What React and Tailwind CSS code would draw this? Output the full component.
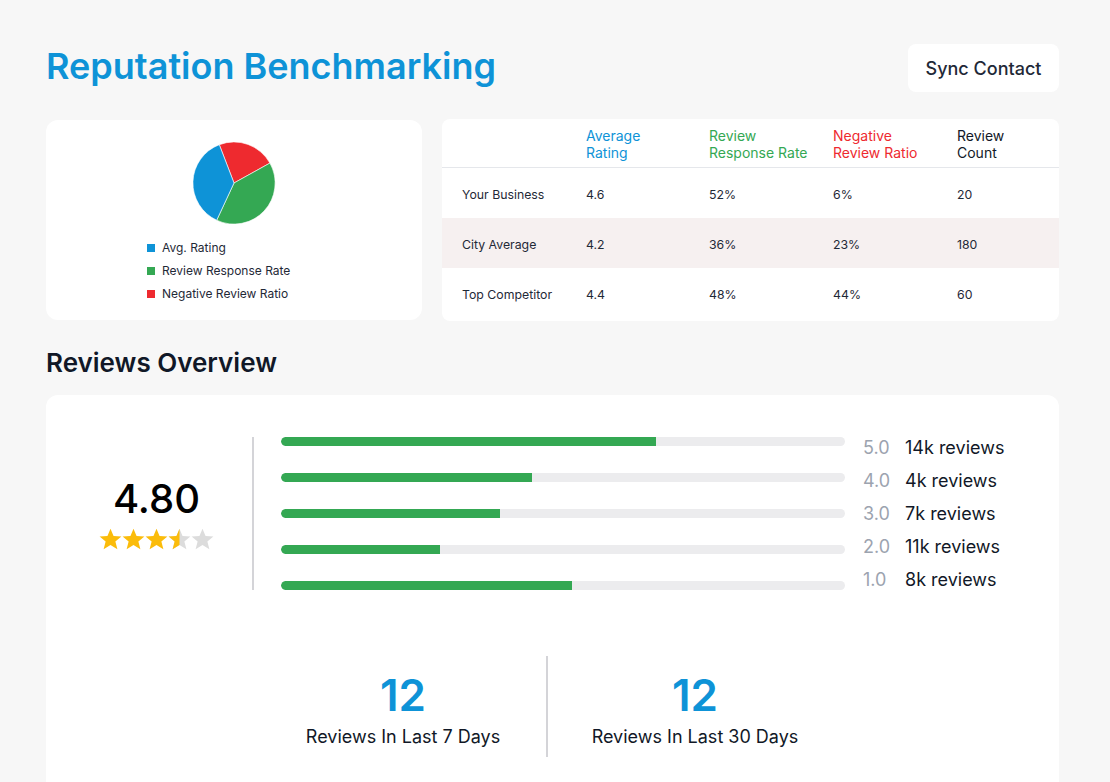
const BLUE = '#0e93d7'

const TABLE = [
  { name: 'Your Business', avg: '4.6', rate: '52%', neg: '6%', count: '20' },
  { name: 'City Average', avg: '4.2', rate: '36%', neg: '23%', count: '180', tint: true },
  { name: 'Top Competitor', avg: '4.4', rate: '48%', neg: '44%', count: '60' },
]

const BARS = [
  { label: '5.0', pct: 66.5, text: '14k reviews' },
  { label: '4.0', pct: 44.5, text: '4k reviews' },
  { label: '3.0', pct: 38.8, text: '7k reviews' },
  { label: '2.0', pct: 28.2, text: '11k reviews' },
  { label: '1.0', pct: 51.6, text: '8k reviews' },
]

const STAR = '12,0.8 15.2,8.4 23.4,8.9 17.1,14.1 19.2,22.2 12,17.7 4.8,22.2 6.9,14.1 0.6,8.9 8.8,8.4'

function Pie() {
  return (
    <svg width="84" height="84" viewBox="0 0 84 84">
      <path d="M42 42 L27.3 3.7 A41 41 0 0 1 77.9 22.1 Z" fill="#ee2a2f" stroke="#fff" strokeWidth="0.6" />
      <path d="M42 42 L77.9 22.1 A41 41 0 0 1 24.7 79.2 Z" fill="#34a853" stroke="#fff" strokeWidth="0.6" />
      <path d="M42 42 L24.7 79.2 A41 41 0 0 1 27.3 3.7 Z" fill="#0e93d7" stroke="#fff" strokeWidth="0.6" />
    </svg>
  )
}

function Stars() {
  return (
    <div className="flex">
      {[0, 1, 2, 3, 4].map(i => (
        <svg key={i} width="23" height="22" viewBox="0 0 24 23">
          <defs>
            <clipPath id={`half-${i}`}>
              <rect x="0" y="0" width="12" height="23" />
            </clipPath>
          </defs>
          <polygon points={STAR} fill={i < 3 ? '#fbbc0a' : '#dcdcdc'} />
          {i === 3 && <polygon points={STAR} fill="#fbbc0a" clipPath={`url(#half-${i})`} />}
        </svg>
      ))}
    </div>
  )
}

export default function App() {
  return (
    <div className="min-h-screen bg-[#f7f7f7] font-['Inter',sans-serif] text-[#111827]">
      <div className="w-[1013px] ml-[46px] pt-[44px]">
        {/* Header */}
        <div className="flex items-center justify-between h-[48px]">
          <h1 className="text-[36px] leading-none font-semibold mt-[-4px]" style={{ color: BLUE }}>
            Reputation Benchmarking
          </h1>
          <button className="h-[48px] w-[151px] bg-white rounded-lg text-[18px] font-medium text-[#1f2937]">
            Sync Contact
          </button>
        </div>

        {/* Benchmark cards */}
        <div className="flex gap-[20px] mt-[27px]">
          <div className="w-[376px] h-[200px] bg-white rounded-xl pt-[21px] mt-[1px]">
            <div className="flex justify-center">
              <Pie />
            </div>
            <div className="ml-[101px] mt-[11px] flex flex-col">
              {[
                ['#0e93d7', 'Avg. Rating'],
                ['#34a853', 'Review Response Rate'],
                ['#ee2a2f', 'Negative Review Ratio'],
              ].map(([c, t]) => (
                <div key={t} className="flex items-center h-[23px] text-[12px] text-[#1f2937]">
                  <span className="w-[8px] h-[8px] mr-[7px]" style={{ background: c }} />
                  {t}
                </div>
              ))}
            </div>
          </div>

          <div className="flex-1 h-[202px] bg-white rounded-lg overflow-hidden">
            <div className="grid grid-cols-[144px_123px_124px_124px_1fr] h-[49px] pt-[1px] items-center border-b border-[#e5e7eb] text-[14px] leading-[17px]">
              <div />
              <div style={{ color: BLUE }}>Average<br />Rating</div>
              <div className="text-[#34a853]">Review<br />Response Rate</div>
              <div className="text-[#ee2a2f]">Negative<br />Review Ratio</div>
              <div className="text-[#111827]">Review<br />Count</div>
            </div>
            {TABLE.map(r => (
              <div
                key={r.name}
                className={`grid grid-cols-[144px_123px_124px_124px_1fr] h-[50px] pt-[4px] items-center text-[12.3px] text-[#1f2937] ${r.tint ? 'bg-[#f6f0f0]' : ''}`}
              >
                <div className="pl-[20px]">{r.name}</div>
                <div>{r.avg}</div>
                <div>{r.rate}</div>
                <div>{r.neg}</div>
                <div>{r.count}</div>
              </div>
            ))}
          </div>
        </div>

        {/* Reviews overview */}
        <h2 className="mt-[26px] text-[26px] leading-[32px] font-semibold text-[#111827]">Reviews Overview</h2>

        <div className="mt-[16px] bg-white rounded-xl pt-[28px] pb-[40px]">
          <div className="flex items-center">
            <div className="w-[206px] pl-[15px] flex flex-col items-center">
              <div className="text-[40px] leading-[44px] font-medium text-black">4.80</div>
              <div className="mt-[7px]">
                <Stars />
              </div>
            </div>
            <div className="w-[2px] h-[153px] bg-[#d4d4d8]" />
            <div className="ml-[27px] flex flex-col">
              {BARS.map(b => (
                <div key={b.label} className="flex items-center h-[36px]">
                  <div className="w-[564px] h-[9px] rounded-full bg-[#ececee] overflow-hidden">
                    <div className="h-full bg-[#34a853] rounded-l-full" style={{ width: `${b.pct}%` }} />
                  </div>
                </div>
              ))}
            </div>
            <div className="ml-[18px] flex flex-col">
              {BARS.map(b => (
                <div key={b.label} className="flex items-center h-[33px] text-[18px]">
                  <span className="w-[42px] text-[#9ca3af]">{b.label}</span>
                  <span className="text-[#111827]">{b.text}</span>
                </div>
              ))}
            </div>
          </div>

          <div className="flex items-center mt-[53px] pl-[214px]">
            <div className="w-[286px] pt-[8px] flex flex-col items-center">
              <div className="text-[44px] leading-[44px] font-semibold" style={{ color: BLUE }}>12</div>
              <div className="mt-[8px] text-[18px] leading-[24px] text-[#111827]">Reviews In Last 7 Days</div>
            </div>
            <div className="w-[2px] h-[101px] bg-[#d4d4d8]" />
            <div className="w-[294px] pt-[8px] flex flex-col items-center">
              <div className="text-[44px] leading-[44px] font-semibold" style={{ color: BLUE }}>12</div>
              <div className="mt-[8px] text-[18px] leading-[24px] text-[#111827]">Reviews In Last 30 Days</div>
            </div>
          </div>
        </div>
      </div>
    </div>
  )
}
